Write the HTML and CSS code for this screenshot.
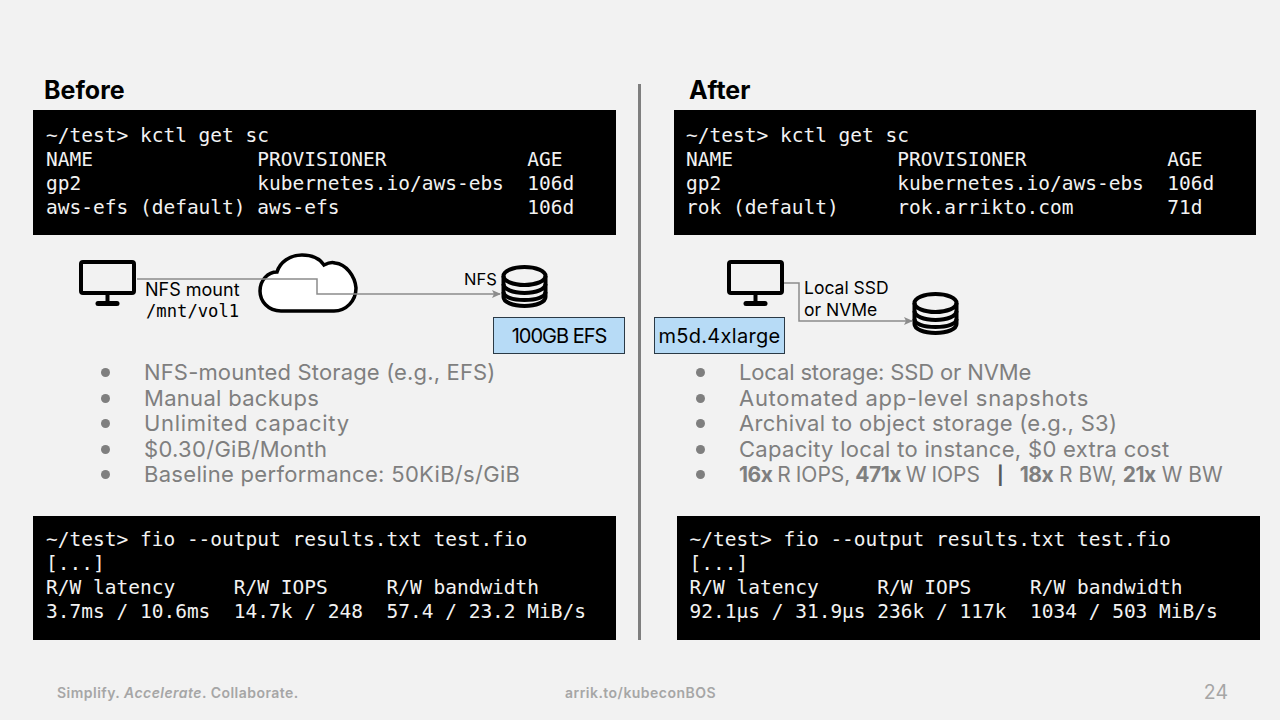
FILE: index.html
```html
<!DOCTYPE html>
<html lang="en">
<head>
<meta charset="utf-8">
<title>Before / After</title>
<link rel="stylesheet" href="styles.css">
</head>
<body>
<div class="slide">
  <main class="compare">
    <section class="col col-before">
      <h2 class="title">Before</h2>
      <pre class="term term-top">~/test&gt; kctl get sc
NAME              PROVISIONER            AGE
gp2               kubernetes.io/aws-ebs  106d
aws-efs (default) aws-efs                106d</pre>
      <div class="diagram">
        <svg class="canvas" viewBox="0 0 638 125" width="638" height="125" aria-hidden="true">
          <defs>
            <g id="monitor">
              <rect x="2" y="2" width="53" height="31" rx="2" class="ink"/>
              <path d="M28.500 33V42" class="ink"/>
              <path d="M19 43.500H38" class="ink ink-foot"/>
            </g>
            <g id="db">
              <ellipse cx="23" cy="12" rx="21" ry="9" class="ink"/>
              <path d="M2 12V33C2 38 11 42 23 42S44 38 44 33V12" class="ink"/>
              <path d="M2 20C2 25 11 29 23 29S44 25 44 20" class="ink"/>
              <path d="M2 28C2 33 11 36 23 36S44 33 44 28" class="ink"/>
            </g>
            <marker id="arrow" markerWidth="9" markerHeight="8" refX="8" refY="4" orient="auto" markerUnits="userSpaceOnUse">
              <path d="M0 0L9 4L0 8L2 4Z" fill="#8c8c8c"/>
            </marker>
          </defs>
          <use href="#monitor" x="79" y="25"/>
          <path d="M281 76C268 76 260 66 260 56C260 45 268 37 277 37C280 27 290 20 302 20C312 20 320 24 324 30C328 28 332 27 335 28C346 29 355 41 356 53C356 66 346 76 334 76Z" class="cloud"/>
          <path d="M137 44H317V59H500" class="link" marker-end="url(#arrow)"/>
          <use href="#db" x="501.500" y="29"/>
        </svg>
        <span class="label label-mount">NFS mount</span>
        <span class="label label-path">/mnt/vol1</span>
        <span class="label label-nfs">NFS</span>
        <div class="tag tag-efs">100GB EFS</div>
      </div>
      <ul class="points">
        <li class="fit-b">NFS-mounted Storage (e.g., EFS)</li>
        <li>Manual backups</li>
        <li class="fit-c">Unlimited capacity</li>
        <li>$0.30/GiB/Month</li>
        <li>Baseline performance: 50KiB/s/GiB</li>
      </ul>
      <pre class="term term-bottom">~/test&gt; fio --output results.txt test.fio
[...]
R/W latency     R/W IOPS     R/W bandwidth
3.7ms / 10.6ms  14.7k / 248  57.4 / 23.2 MiB/s</pre>
    </section>
    <div class="divider"></div>
    <section class="col col-after">
      <h2 class="title">After</h2>
      <pre class="term term-top">~/test&gt; kctl get sc
NAME              PROVISIONER            AGE
gp2               kubernetes.io/aws-ebs  106d
rok (default)     rok.arrikto.com        71d</pre>
      <div class="diagram">
        <svg class="canvas" viewBox="0 0 639 125" width="639" height="125" aria-hidden="true">
          <use href="#monitor" x="86" y="25"/>
          <path d="M143 48H158V86H271" class="link" marker-end="url(#arrow)"/>
          <use href="#db" x="271.500" y="56"/>
        </svg>
        <span class="label label-ssd">Local SSD<br>or NVMe</span>
        <div class="tag tag-m5d">m5d.4xlarge</div>
      </div>
      <ul class="points">
        <li class="fit-a">Local storage: SSD or NVMe</li>
        <li class="fit-c">Automated app-level snapshots</li>
        <li>Archival to object storage (e.g., S3)</li>
        <li>Capacity local to instance, $0 extra cost</li>
        <li class="point-stats"><span><span class="stats-first"><b>16x</b> R IOPS, <b>471x</b> W IOPS</span><span class="pipe">|</span><b>18x</b> R BW, <b>21x</b> W BW</span></li>
      </ul>
      <pre class="term term-bottom">~/test&gt; fio --output results.txt test.fio
[...]
R/W latency     R/W IOPS     R/W bandwidth
92.1µs / 31.9µs 236k / 117k  1034 / 503 MiB/s</pre>
    </section>
  </main>
  <footer class="foot">
    <div class="foot-left">Simplify. <i>Accelerate</i>. Collaborate.</div>
    <div class="foot-mid">arrik.to/kubeconBOS</div>
    <div class="foot-page">24</div>
  </footer>
</div>
</body>
</html>
```
FILE: styles.css
```css
* { box-sizing: border-box; }
html, body { margin: 0; padding: 0; }
body { width: 1280px; height: 720px; overflow: hidden; background: #f2f2f2; }

.slide {
  width: 1280px;
  height: 720px;
  padding-top: 76px;
  background: #f2f2f2;
  font-family: Inter, "Open Sans", sans-serif;
  color: #000;
  display: flex;
  flex-direction: column;
}

.compare {
  display: grid;
  grid-template-columns: 638px 3px 639px;
  height: 564px;
}

.divider { background: #7f7f7f; margin-top: 8px; }

.col { display: flex; flex-direction: column; min-width: 0; }

.title {
  margin: 0;
  height: 34px;
  font-size: 25px;
  line-height: 28px;
  font-weight: 700;
}
.col-before .title { padding-left: 44px; }
.col-after .title { padding-left: 48px; }

.term {
  margin: 0;
  background: #000;
  color: #f2f2f2;
  font-family: "DejaVu Sans Mono", monospace;
  font-size: 19.500px;
  line-height: 24px;
  white-space: pre;
  overflow: hidden;
}
.term-top { height: 125px; padding: 14px 0 0 13px; }
.term-bottom { height: 124px; padding: 12px 0 0 13px; margin-top: auto; }
.col-before .term { width: 583px; margin-left: 33px; }
.col-after .term-top { width: 582px; margin-left: 33px; padding-left: 12px; }
.col-after .term-bottom { width: 583px; margin-left: 36px; padding-left: 12.500px; }

.diagram { position: relative; height: 125px; }
.canvas { position: absolute; left: 0; top: 0; overflow: visible; }
.ink { fill: none; stroke: #000; stroke-width: 4; stroke-linejoin: round; }
.ink-foot { stroke-linecap: round; stroke-width: 5; }
.cloud { fill: #fff; stroke: #000; stroke-width: 3.500; }
.link { fill: none; stroke: #8c8c8c; stroke-width: 1.500; }

.label { position: absolute; font-size: 17.500px; line-height: 22px; white-space: nowrap; color: #000; }
.label-mount { left: 145px; top: 44px; font-size: 18px; }
.label-path { left: 146px; top: 65px; font-family: "DejaVu Sans Mono", monospace; font-size: 17.200px; }
.label-nfs { left: 464px; top: 33px; font-size: 16.500px; }
.label-ssd { left: 163px; top: 42px; }

.tag {
  position: absolute;
  top: 82px;
  height: 37px;
  display: flex;
  align-items: center;
  justify-content: center;
  background: #b7dbf6;
  border: 1.500px solid #2b3a46;
  font-size: 20px;
}
.tag-efs { left: 493px; width: 132px; letter-spacing: -1px; }
.tag-m5d { left: 13px; width: 131px; letter-spacing: 0.300px; }

.points {
  margin: 0;
  padding: 0;
  list-style: none;
  color: #7f7f7f;
  font-size: 22px;
  line-height: 25.500px;
  letter-spacing: 0.300px;
}
.points li { display: flex; align-items: center; height: 25.500px; white-space: pre; }
.points li::before {
  content: "";
  flex: none;
  width: 9px;
  height: 9px;
  border-radius: 50%;
  background: #7f7f7f;
  margin-right: 34px;
}
.col-before .points { padding-left: 101px; }
.col-after .points { padding-left: 55px; }
.points .fit-a { letter-spacing: -0.150px; }
.points .fit-b { letter-spacing: 0.150px; }
.points .fit-c { letter-spacing: 0.700px; }
.points .point-stats { font-size: 21px; letter-spacing: 0; }
.points b { font-weight: 700; letter-spacing: -0.500px; }
.stats-first { word-spacing: -1px; }
.pipe { color: #595959; font-size: 18px; font-weight: 700; margin: 0 16px 0 17px; }

.foot {
  margin-top: 40px;
  height: 24px;
  display: grid;
  grid-template-columns: 1fr auto 1fr;
  align-items: center;
  padding: 0 52px 0 57px;
  color: #a6a6a6;
  font-size: 14px;
  font-weight: 600;
  letter-spacing: 0.470px;
}
.foot-mid { margin-right: 4px; }
.foot-page { justify-self: end; font-size: 19.500px; font-weight: 400; letter-spacing: 0; }
```
